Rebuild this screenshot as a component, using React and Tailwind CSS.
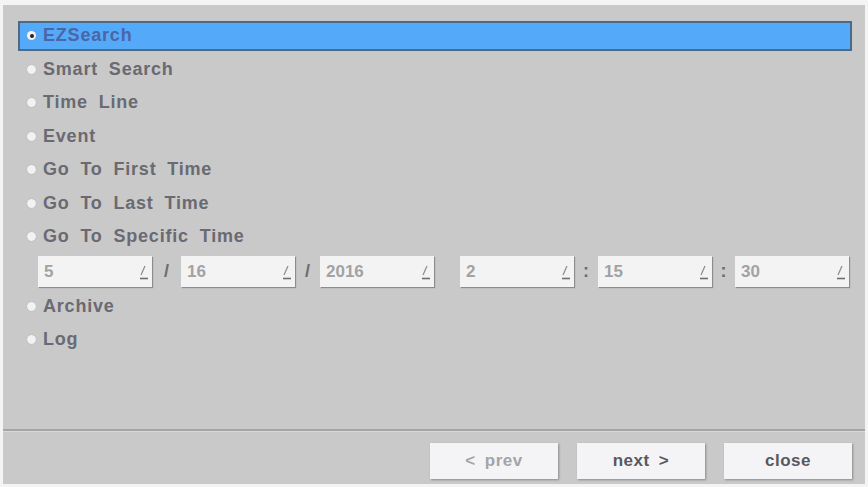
import React from "react";

const items = [
  "EZSearch",
  "Smart Search",
  "Time Line",
  "Event",
  "Go To First Time",
  "Go To Last Time",
  "Go To Specific Time",
];

function Radio({ checked }) {
  return (
    <span className="w-[9px] h-[9px] rounded-full bg-[#f2f2f2] flex items-center justify-center shrink-0 shadow-[0_0_1px_#999]">
      {checked && <span className="w-[4px] h-[4px] rounded-full bg-[#222]" />}
    </span>
  );
}

function Pen() {
  return (
    <svg width="12" height="18" viewBox="0 0 12 18" className="shrink-0">
      <line x1="8" y1="3" x2="4" y2="12" stroke="#8a8a8a" strokeWidth="1.2" />
      <line x1="3" y1="15.5" x2="11" y2="15.5" stroke="#6e6e6e" strokeWidth="1.6" />
    </svg>
  );
}

function Field({ value }) {
  return (
    <div className="w-[114px] h-[31px] bg-[#f3f3f4] shadow-[1px_1px_1px_#8c8c8c] flex items-center justify-between pl-[6px] pr-[3px]">
      <span className="text-[17px] font-bold text-[#a2a2a4]">{value}</span>
      <Pen />
    </div>
  );
}

function Sep({ ch, w }) {
  return (
    <span className={w + " text-center text-[18px] font-bold text-[#6c6c72]"}>{ch}</span>
  );
}

function Button({ children, dim }) {
  return (
    <button
      className={
        "w-[128px] h-[36px] bg-[#f4f4f6] shadow-[1px_1px_2px_#8a8a8a] text-[17px] font-bold tracking-[0.5px] [word-spacing:4px] " +
        (dim ? "text-[#a4a4a8]" : "text-[#58585e]")
      }
    >
      {children}
    </button>
  );
}

function Row({ label, checked }) {
  return (
    <div className="h-[33.5px] flex items-center">
      <div
        className={
          "w-full h-[30px] flex items-center gap-[7px] pl-[7px] " +
          (checked ? "bg-[#55a9f9] border-2 border-[#4a6a86]" : "border-2 border-transparent")
        }
      >
        <Radio checked={checked} />
        <span
          className={
            "text-[18px] font-bold tracking-[0.8px] [word-spacing:5px] " +
            (checked ? "text-[#4a66a6]" : "text-[#6a6a72]")
          }
        >
          {label}
        </span>
      </div>
    </div>
  );
}

export default function App() {
  return (
    <div
      className="w-[868px] h-[487px] bg-[#f4f4f4] pt-[5px] pl-[3px] pr-[3px] pb-[3px]"
      style={{ fontFamily: '"Liberation Sans", Arial, sans-serif' }}
    >
      <div className="h-full bg-[#c9c9c9] flex flex-col">
        <div className="flex-1 pt-[14px] pl-[15px] pr-[13px]">
          {items.map((label, i) => (
            <Row key={label} label={label} checked={i === 0} />
          ))}
          <div className="h-[36px] flex items-center pl-[20px]">
            <Field value="5" />
            <Sep ch="/" w="w-[29px]" />
            <Field value="16" />
            <Sep ch="/" w="w-[25px]" />
            <Field value="2016" />
            <span className="w-[26px]" />
            <Field value="2" />
            <Sep ch=":" w="w-[24px]" />
            <Field value="15" />
            <Sep ch=":" w="w-[23px]" />
            <Field value="30" />
          </div>
          <Row label="Archive" />
          <Row label="Log" />
        </div>
        <div className="border-t-2 border-[#a4a4a4] shadow-[0_1px_0_#d8d8d8]" />
        <div className="h-[53px] flex items-start justify-end gap-[19px] pr-[13px] pt-[12px]">
          <Button dim>{"< prev"}</Button>
          <Button>{"next >"}</Button>
          <Button>close</Button>
        </div>
      </div>
    </div>
  );
}
